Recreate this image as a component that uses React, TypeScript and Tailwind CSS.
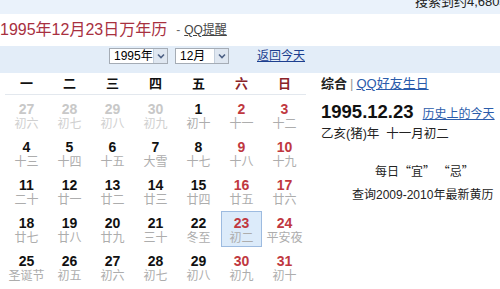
import React from 'react';

type Day = {
  num: number;
  lunar: string;
  muted?: boolean;
  today?: boolean;
};

const weekdays = ['一', '二', '三', '四', '五', '六', '日'];

const weeks: Day[][] = [
  [
    { num: 27, lunar: '初六', muted: true },
    { num: 28, lunar: '初七', muted: true },
    { num: 29, lunar: '初八', muted: true },
    { num: 30, lunar: '初九', muted: true },
    { num: 1, lunar: '初十' },
    { num: 2, lunar: '十一' },
    { num: 3, lunar: '十二' },
  ],
  [
    { num: 4, lunar: '十三' },
    { num: 5, lunar: '十四' },
    { num: 6, lunar: '十五' },
    { num: 7, lunar: '大雪' },
    { num: 8, lunar: '十七' },
    { num: 9, lunar: '十八' },
    { num: 10, lunar: '十九' },
  ],
  [
    { num: 11, lunar: '二十' },
    { num: 12, lunar: '廿一' },
    { num: 13, lunar: '廿二' },
    { num: 14, lunar: '廿三' },
    { num: 15, lunar: '廿四' },
    { num: 16, lunar: '廿五' },
    { num: 17, lunar: '廿六' },
  ],
  [
    { num: 18, lunar: '廿七' },
    { num: 19, lunar: '廿八' },
    { num: 20, lunar: '廿九' },
    { num: 21, lunar: '三十' },
    { num: 22, lunar: '冬至' },
    { num: 23, lunar: '初二', today: true },
    { num: 24, lunar: '平安夜' },
  ],
  [
    { num: 25, lunar: '圣诞节' },
    { num: 26, lunar: '初五' },
    { num: 27, lunar: '初六' },
    { num: 28, lunar: '初七' },
    { num: 29, lunar: '初八' },
    { num: 30, lunar: '初九' },
    { num: 31, lunar: '初十' },
  ],
];

function FakeSelect({ label, width }: { label: string; width: string }) {
  return (
    <div className={`flex h-[16px] ${width} border border-[#a5acb5] bg-white`}>
      <div className="flex-1 pl-[4px] text-[12px] leading-[14px] text-black">{label}</div>
      <div className="flex w-[14px] items-center justify-center border-l border-[#c4cfdc] bg-[#dfe7f1]">
        <svg width="8" height="6" viewBox="0 0 8 6">
          <path d="M1 1.5 L4 4.5 L7 1.5" fill="none" stroke="#4d6185" strokeWidth="1.6" />
        </svg>
      </div>
    </div>
  );
}

function DayCell({ day, col }: { day: Day; col: number }) {
  const weekend = col >= 5;
  const numColor = day.muted ? 'text-[#c8c8c8]' : weekend ? 'text-[#c0383f]' : 'text-[#111]';
  const lunarColor = day.muted ? 'text-[#d0d0d0]' : 'text-[#adadad]';
  return (
    <div className="h-[38px] px-[1px] pt-[1px]">
      <div
        className={`flex h-[36px] flex-col items-center border pt-[3px] ${
          day.today ? 'border-[#9dbbe0] bg-[#dcebfa]' : 'border-transparent'
        }`}
      >
        <span className={`text-[14px] font-bold leading-[16px] ${numColor}`}>{day.num}</span>
        <span className={`text-[12px] leading-[14px] ${lunarColor}`}>{day.lunar}</span>
      </div>
    </div>
  );
}

export default function App() {
  return (
    <div
      className="h-[289px] w-[500px] overflow-hidden bg-white"
      style={{ fontFamily: '"Liberation Sans", "Noto Sans CJK SC", sans-serif' }}
    >
      {/* search result strip */}
      <div className="h-[14px] overflow-hidden bg-[#eaf2fb]">
        <div className="-mt-[6px] ml-[415px] whitespace-nowrap text-[13px] leading-[16px] text-[#222]">
          搜索到约4,680项
        </div>
      </div>

      {/* title */}
      <div className="flex h-[32px] items-center whitespace-nowrap">
        <span className="text-[16px] leading-[20px] text-[#a8303f]">1995年12月23日万年历</span>
        <span className="ml-[9px] text-[12px] text-[#666]">-</span>
        <a className="ml-[4px] text-[12px] text-[#444] underline">QQ提醒</a>
      </div>

      {/* controls bar */}
      <div className="flex h-[27px] items-start bg-[#e3edf8] pt-[2px]">
        <div className="ml-[109px]">
          <FakeSelect label="1995年" width="w-[59px]" />
        </div>
        <div className="ml-[7px]">
          <FakeSelect label="12月" width="w-[54px]" />
        </div>
        <a className="ml-[28px] text-[12px] leading-[16px] text-[#1d3f8f] underline">返回今天</a>
      </div>

      <div className="flex">
        {/* calendar */}
        <div className="w-[306px] shrink-0 pl-[5px]">
          <div className="grid h-[22px] grid-cols-7 border-b border-[#e3e8ee]">
            {weekdays.map((w, i) => (
              <div
                key={w}
                className={`flex items-center justify-center text-[13px] font-bold ${
                  i >= 5 ? 'text-[#8a2328]' : 'text-[#111]'
                }`}
              >
                {w}
              </div>
            ))}
          </div>
          <div className="pt-[1px]">
            {weeks.map((week, r) => (
              <div key={r} className="grid grid-cols-7">
                {week.map((d, c) => (
                  <DayCell key={c} day={d} col={c} />
                ))}
              </div>
            ))}
          </div>
        </div>

        {/* side panel */}
        <div className="min-w-0 flex-1 pl-[15px] text-[#222]">
          <div className="flex h-[22px] items-center whitespace-nowrap text-[13px]">
            <span className="font-bold text-[#222]">综合</span>
            <span className="mx-[3px] text-[#999]">|</span>
            <a className="text-[#2b5cab] underline">QQ好友生日</a>
          </div>
          <div className="mt-[6px] flex items-baseline whitespace-nowrap">
            <span className="text-[18.5px] font-bold leading-[22px] text-[#111]">1995.12.23</span>
            <a className="ml-[9px] text-[12px] text-[#2b5cab] underline">历史上的今天</a>
          </div>
          <div className="mt-[3px] whitespace-nowrap text-[12.5px] leading-[16px] text-[#222]">
            乙亥(猪)年&nbsp;&nbsp;十一月初二
          </div>
          <div
            className="mt-[21px] pl-[54px] whitespace-nowrap text-[12px] leading-[16px] text-[#222]"
            style={{ fontFamily: '"Noto Sans CJK SC", sans-serif' }}
          >
            每日“宜” “忌”
          </div>
          <div className="mt-[8px] pl-[31px] whitespace-nowrap text-[12px] leading-[16px] text-[#222]">
            查询2009-2010年最新黄历
          </div>
        </div>
      </div>
    </div>
  );
}
